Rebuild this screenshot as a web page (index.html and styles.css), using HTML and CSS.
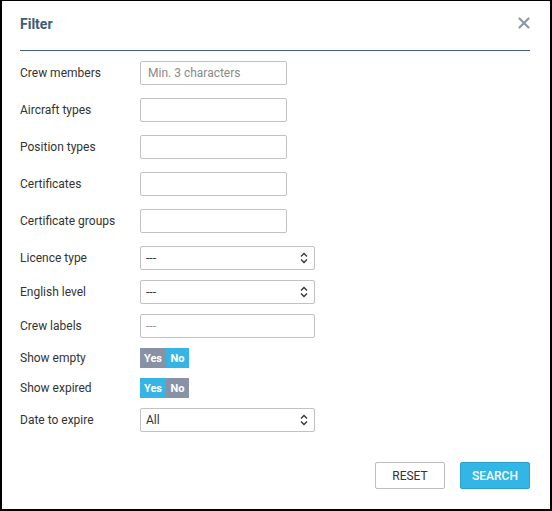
FILE: index.html
```html
<!DOCTYPE html>
<html>
<head>
<meta charset="utf-8">
<link rel="stylesheet" href="styles.css">
</head>
<body>
<div class="dialog">
  <div class="header">
    <div class="title">Filter</div>
    <svg class="close" width="12" height="12" viewBox="0 0 12 12"><path d="M1.5 1.5 L10.5 10.5 M10.5 1.5 L1.5 10.5" stroke="#8e99a8" stroke-width="2.2" stroke-linecap="round"/></svg>
  </div>
  <div class="form">
    <div class="row r13"><label>Crew members</label><input class="inp" placeholder="Min. 3 characters"></div>
    <div class="row r13"><label>Aircraft types</label><input class="inp"></div>
    <div class="row r13"><label>Position types</label><input class="inp"></div>
    <div class="row r13"><label>Certificates</label><input class="inp"></div>
    <div class="row r13"><label>Certificate groups</label><input class="inp"></div>
    <div class="row r10"><label>Licence type</label><div class="sel"><span>---</span><svg width="8" height="12" viewBox="0 0 8 12"><path d="M1 4.5 L4 1.5 L7 4.5 M1 7.5 L4 10.5 L7 7.5" fill="none" stroke="#333" stroke-width="1.3"/></svg></div></div>
    <div class="row r10"><label>English level</label><div class="sel"><span>---</span><svg width="8" height="12" viewBox="0 0 8 12"><path d="M1 4.5 L4 1.5 L7 4.5 M1 7.5 L4 10.5 L7 7.5" fill="none" stroke="#333" stroke-width="1.3"/></svg></div></div>
    <div class="row r10"><label>Crew labels</label><div class="sel tags"><span>---</span></div></div>
    <div class="row r10 trow"><label>Show empty</label><div class="toggle"><span class="yes off">Yes</span><span class="no on">No</span></div></div>
    <div class="row r10 trow"><label>Show expired</label><div class="toggle"><span class="yes on">Yes</span><span class="no off">No</span></div></div>
    <div class="row"><label>Date to expire</label><div class="sel"><span class="val">All</span><svg width="8" height="12" viewBox="0 0 8 12"><path d="M1 4.5 L4 1.5 L7 4.5 M1 7.5 L4 10.5 L7 7.5" fill="none" stroke="#333" stroke-width="1.3"/></svg></div></div>
  </div>
  <div class="footer">
    <button class="btn reset">RESET</button>
    <button class="btn search">SEARCH</button>
  </div>
</div>
</body>
</html>
```
FILE: styles.css
```css
html, body {
  margin: 0;
  padding: 0;
  background: #fff;
}
body {
  font-family: Roboto, "Liberation Sans", sans-serif;
  color: #333;
}
.dialog {
  width: 552px;
  height: 511px;
  box-sizing: border-box;
  border: 2px solid #000;
  border-top-width: 1px;
  background: #fff;
  padding: 0 20px 0 18px;
  display: flex;
  flex-direction: column;
}
.header {
  display: flex;
  align-items: center;
  justify-content: space-between;
  height: 50px;
  border-bottom: 1px solid #41618a;
  box-sizing: border-box;
}
.title {
  font-size: 14px;
  font-weight: bold;
  color: #3d5a80;
  margin-top: -4px;
}
.close {
  margin-top: -6px;
}
.form {
  padding-top: 10px;
  display: flex;
  flex-direction: column;
}
.row {
  display: flex;
  align-items: center;
}
.r13 { margin-bottom: 13px; }
.r10 { margin-bottom: 10px; }
.row label {
  width: 120px;
  flex: none;
  font-size: 12px;
  color: #333;
  margin-top: -1px;
}
.inp {
  width: 147px;
  height: 24px;
  box-sizing: border-box;
  border: 1px solid #c2c2c2;
  border-radius: 2px;
  padding: 0 7px;
  font-family: Roboto, "Liberation Sans", sans-serif;
  font-size: 12px;
  color: #333;
  outline: none;
}
.inp::placeholder {
  color: #8a8a8a;
}
.sel {
  width: 175px;
  height: 24px;
  box-sizing: border-box;
  border: 1px solid #c2c2c2;
  border-radius: 2px;
  padding: 0 6px 0 5px;
  display: flex;
  align-items: center;
  justify-content: space-between;
  font-size: 12px;
  color: #333;
}
.tags span {
  color: #999;
}
.toggle {
  display: flex;
  height: 20px;
  font-size: 11px;
  font-weight: bold;
  color: #fff;
}
.toggle span {
  display: flex;
  align-items: center;
  justify-content: center;
}
.toggle .yes { width: 26px; }
.toggle .no { width: 23px; }
.toggle .on { background: #36b4e5; }
.toggle .off { background: #8792a4; }
.footer {
  margin-top: auto;
  margin-bottom: 20px;
  display: flex;
  justify-content: flex-end;
  gap: 15px;
}
.btn {
  width: 70px;
  height: 27px;
  box-sizing: border-box;
  border-radius: 2px;
  font-family: Roboto, "Liberation Sans", sans-serif;
  font-size: 12px;
  padding: 0;
}
.reset {
  background: #fff;
  border: 1px solid #bdbdbd;
  color: #333;
}
.search {
  background: #33b5e5;
  border: 1px solid #2aa0cc;
  color: #fff;
  font-weight: 500;
}
```
